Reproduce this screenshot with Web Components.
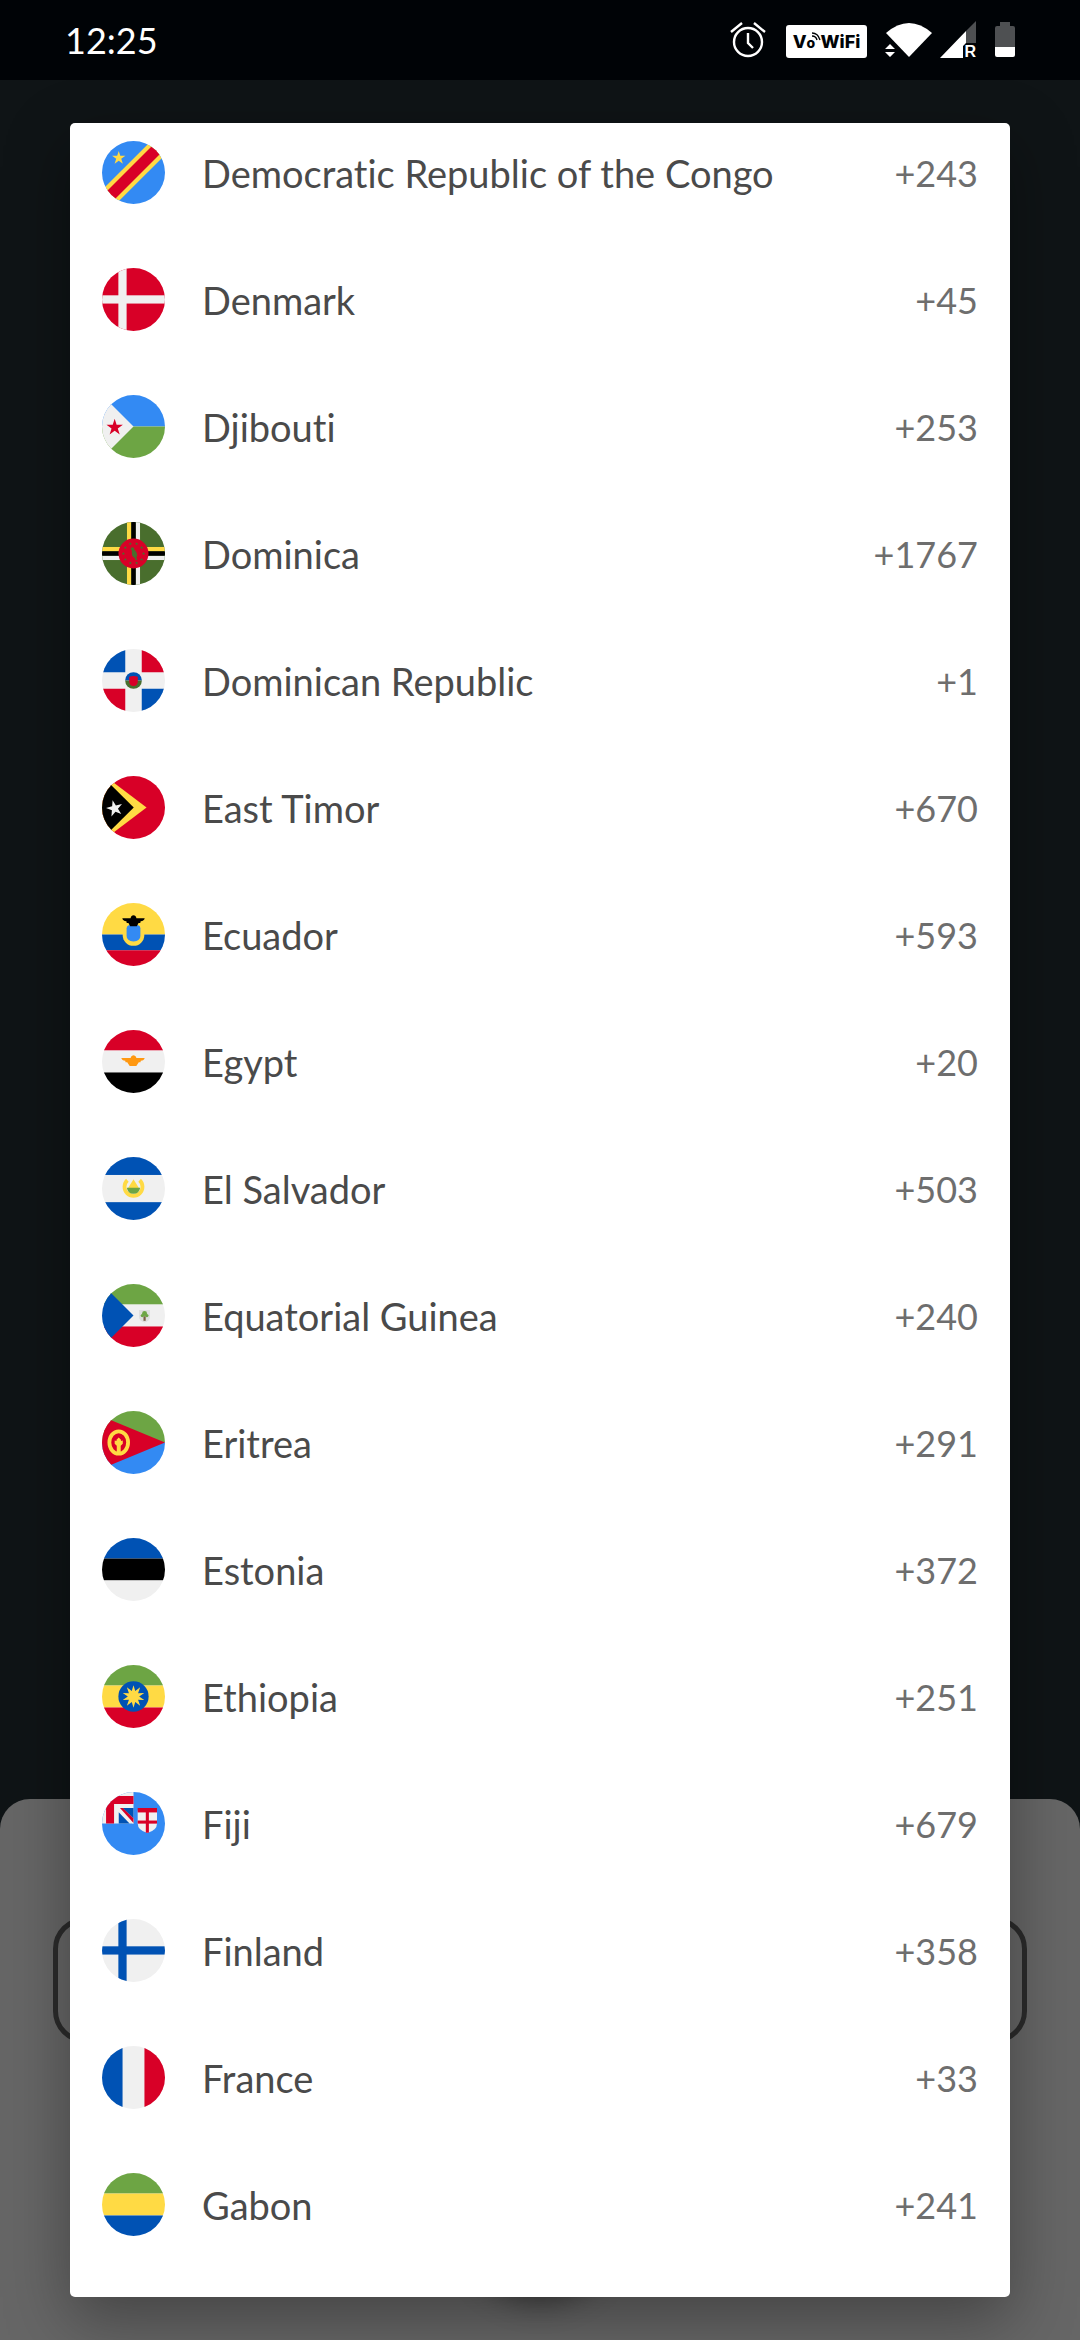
<!DOCTYPE html>
<html lang="en">
<head>
<meta charset="utf-8">
<meta name="viewport" content="width=device-width, initial-scale=1">
<title>Select country</title>
<style>
  html { background: #0f1416; }
  body { margin: 0; font-family: Lato, "Open Sans", sans-serif; font-variant-ligatures: none; }
</style>
</head>
<body>
<country-screen></country-screen>

<script>
const RED = '#d80027', BLUE = '#0052b4', SKY = '#338af3', GREEN = '#6da544',
      DARK = '#496e2d', YELLOW = '#ffda44', WHITE = '#f0f0f0', ORANGE = '#ff9811';

const rect = (x, y, w, h, fill) => `<rect x="${x}" y="${y}" width="${w}" height="${h}" fill="${fill}"/>`;
const path = (d, fill) => `<path d="${d}" fill="${fill}"/>`;
const circle = (x, y, r, fill) => `<circle cx="${x}" cy="${y}" r="${r}" fill="${fill}"/>`;
const star = (cx, cy, r, fill, points = 5, inner = 0.382, turn = 0) => {
  const p = [];
  for (let i = 0; i < points * 2; i++) {
    const a = Math.PI * i / points + turn * Math.PI / 180;
    const k = i % 2 ? r * inner : r;
    p.push(`${(cx + k * Math.sin(a)).toFixed(1)},${(cy - k * Math.cos(a)).toFixed(1)}`);
  }
  return `<polygon points="${p.join(' ')}" fill="${fill}"/>`;
};
const bands = (a, b, c) => rect(0, 0, 512, 167, a) + rect(0, 167, 512, 178, b) + rect(0, 345, 512, 167, c);
const ring = (n, r, size, fill) => Array.from({ length: n }, (_, i) => {
  const a = 2 * Math.PI * i / n + Math.PI / n;
  return star(256 + r * Math.sin(a), 256 - r * Math.cos(a), size, fill);
}).join('');

const FLAGS = {
  cd: rect(0, 0, 512, 512, SKY)
    + '<path d="M-40 552 552 -40" stroke="#ffda44" stroke-width="160"/><path d="M-40 552 552 -40" stroke="#d80027" stroke-width="92"/>'
    + star(136, 138, 57, YELLOW),
  dk: rect(0, 0, 512, 512, RED) + rect(133, 0, 67, 512, WHITE) + rect(0, 222, 512, 67, WHITE),
  dj: rect(0, 0, 512, 256, SKY) + rect(0, 256, 512, 256, GREEN) + path('M0 0 256 256 0 512z', WHITE) + star(103, 264, 70, RED),
  dm: rect(0, 0, 512, 512, DARK)
    + rect(203, 0, 35, 512, YELLOW) + rect(274, 0, 35, 512, WHITE)
    + rect(0, 203, 512, 35, YELLOW) + rect(0, 274, 512, 35, WHITE)
    + rect(238, 0, 36, 512, '#000') + rect(0, 238, 512, 36, '#000')
    + circle(256, 256, 122, RED) + ring(10, 82, 14, DARK)
    + path('M243 205c13-3 22 6 19 19 14 10 25 30 24 52l-7 13 8 20-14-1-9-17c-15-8-22-22-21-40l-2-24-11-8z', DARK),
  do: rect(0, 0, 512, 512, WHITE) + rect(0, 0, 189, 189, BLUE) + rect(323, 0, 189, 189, RED)
    + rect(0, 323, 189, 189, RED) + rect(323, 323, 189, 189, BLUE)
    + path('M188 256a68 68 0 0 1 136 0z', BLUE) + path('M188 256a68 68 0 0 0 136 0z', DARK)
    + path('M221 226q35-13 70 0v37q0 38-35 38t-35-38z', RED),
  tl: rect(0, 0, 512, 512, RED) + path('M0-18 362 256 0 530z', YELLOW) + path('M0 0 258 256 0 512z', '#000') + star(103, 264, 70, WHITE, 5, 0.382, -14),
  ec: rect(0, 0, 512, 256, YELLOW) + rect(0, 256, 512, 128, BLUE) + rect(0, 384, 512, 128, RED)
    + path('M168 250h176v10a88 88 0 0 1-176 0z', YELLOW)
    + path('M200 205q0-30 56-30t56 30v62q0 44-56 46-56-2-56-46z', SKY)
    + path('M165 124h67q5-24 24-24t24 24h67q-4 22-33 24l-3 14h-14l-14 26h-54l-14-26h-14l-3-14q-29-2-33-24z', '#000'),
  eg: bands(RED, WHITE, '#000')
    + path('M165 227h67q5-21 24-21t24 21h67q-4 20-32 23l-2 12h-14l-20 30h-54l-20-30h-14l-2-12q-28-3-32-23z', ORANGE),
  sv: rect(0, 0, 512, 512, WHITE) + rect(0, 0, 512, 146, BLUE) + rect(0, 367, 512, 145, BLUE)
    + '<path d="M206 189a73 73 0 1 0 100 0" fill="none" stroke="#ffda44" stroke-width="31"/>'
    + path('M256 180 300 252H212z', YELLOW) + path('M202 250h108q-7 49-54 49t-54-49z', GREEN),
  gq: bands(GREEN, WHITE, RED) + path('M0 0 256 256 0 512z', BLUE)
    + path('M301 211h89v55q0 34-44 46-45-12-45-46z', '#dedede')
    + rect(337, 262, 18, 37, '#786145') + circle(346, 240, 20, GREEN) + circle(328, 257, 14, GREEN) + circle(364, 257, 14, GREEN),
  er: rect(0, 0, 512, 256, GREEN) + rect(0, 256, 512, 256, SKY) + path('M0 44 75 75 512 256 75 437 0 468z', RED)
    + '<ellipse cx="136" cy="256" rx="76" ry="91" fill="none" stroke="#ffda44" stroke-width="31"/>'
    + path('M136 216 154 234v10l15-4v26l-17 16v60h-32v-60l-17-16v-26l15 4v-10z', YELLOW),
  ee: bands(BLUE, '#000', WHITE),
  et: bands(GREEN, YELLOW, RED) + circle(256, 256, 123, BLUE) + star(256, 256, 92, YELLOW, 10, 0.5),
  fj: rect(0, 0, 512, 512, SKY) + rect(0, 0, 256, 256, WHITE)
    + path('M33 33H256V98H98V256H33z', RED)
    + path('M166 130h90v86z', BLUE) + path('M136 164v92h88z', BLUE)
    + path('M136 130h27L256 223v33h-8z', WHITE) + path('M146 130h24L256 216v36z', RED)
    + path('M290 150h157v104q0 58-78 79-79-21-79-79z', WHITE) + rect(290, 130, 157, 36, RED)
    + rect(290, 232, 157, 25, RED) + rect(356, 150, 25, 181, RED),
  fi: rect(0, 0, 512, 512, WHITE) + rect(133, 0, 67, 512, BLUE) + rect(0, 222, 512, 67, BLUE),
  fr: rect(0, 0, 512, 512, WHITE) + rect(0, 0, 167, 512, BLUE) + rect(345, 0, 167, 512, RED),
  ga: bands(GREEN, YELLOW, BLUE)
};

const COUNTRIES = [
  ['cd', 'Democratic Republic of the Congo', '+243'],
  ['dk', 'Denmark', '+45'],
  ['dj', 'Djibouti', '+253'],
  ['dm', 'Dominica', '+1767'],
  ['do', 'Dominican Republic', '+1'],
  ['tl', 'East Timor', '+670'],
  ['ec', 'Ecuador', '+593'],
  ['eg', 'Egypt', '+20'],
  ['sv', 'El Salvador', '+503'],
  ['gq', 'Equatorial Guinea', '+240'],
  ['er', 'Eritrea', '+291'],
  ['ee', 'Estonia', '+372'],
  ['et', 'Ethiopia', '+251'],
  ['fj', 'Fiji', '+679'],
  ['fi', 'Finland', '+358'],
  ['fr', 'France', '+33'],
  ['ga', 'Gabon', '+241']
];

class StatusBar extends HTMLElement {
  constructor() {
    super();
    this.attachShadow({ mode: 'open' }).innerHTML = `
      <style>
        :host { display: flex; align-items: center; justify-content: space-between; height: 80px;
                padding: 0 65px 0 65px; box-sizing: border-box; background: #000306; color: #fff; }
        time { font-size: 36px; line-height: 46px; }
        .icons { display: flex; align-items: center; }
        svg { display: block; }
        .badge { display: flex; align-items: center; justify-content: center; width: 81px; height: 33px;
                 margin: 2px 18px 0 20px; border-radius: 3px; background: #fff; color: #000306;
                 font: 800 18px/33px Inter, sans-serif; }
        .vo { display: grid; }
        .vo > * { grid-area: 1 / 1; }
        .o { font-size: 14px; padding-top: 3px; }
        .waves { margin: 9px 0 0 4px; }
        .signal { display: grid; margin: 0 19px 0 7px; }
        .signal > * { grid-area: 1 / 1; }
        .roam { align-self: end; justify-self: end; font: 700 16px/14px "Liberation Sans", sans-serif; }
      </style>
      <time>12:25</time>
      <div class="icons">
        <svg width="36" height="36" viewBox="0 0 36 36" fill="none" stroke="#fff" stroke-width="2.4">
          <circle cx="18" cy="20" r="14"/><path d="M18 11v10l5 5M1 10 12 1M35 10 24 1"/>
        </svg>
        <div class="badge"><span>V</span><span class="vo"><span class="o">o</span>
          <svg class="waves" width="10" height="10" viewBox="0 0 10 10" fill="none" stroke="#000306" stroke-width="1.4"><path d="M1 1q6 0 8 7M1 4q4 0 5 4"/></svg></span><span>WiFi</span></div>
        <svg width="48" height="36" viewBox="0 0 48 36" fill="#fff">
          <path d="M1 11Q24-9 47 11L24 35z"/><path d="M0 27 5 22 10 27zM0 30h10l-5 5z"/>
        </svg>
        <div class="signal">
          <svg width="36" height="38" viewBox="0 0 36 38">
            <path d="M26 10 36 0V22H26z" fill="#4e5052"/><path d="M0 37 26 10V22L23 25V37z" fill="#fff"/>
          </svg>
          <span class="roam">R</span>
        </div>
        <svg width="20" height="36" viewBox="0 0 20 36">
          <path d="M5 0h10v4h3q2 0 2 2v19H0V6q0-2 2-2h3z" fill="#4e5052"/><path d="M0 25h20v8q0 2-2 2H2q-2 0-2-2z" fill="#fff"/>
        </svg>
      </div>`;
  }
}
customElements.define('status-bar', StatusBar);

class CountryFlag extends HTMLElement {
  constructor() {
    super();
    this.attachShadow({ mode: 'open' }).innerHTML = `
      <style>
        :host { display: block; flex: none; width: 63px; height: 63px; border-radius: 50%; overflow: hidden; }
        svg { display: block; width: 100%; height: 100%; }
      </style>
      <svg viewBox="0 0 512 512"></svg>`;
  }
  connectedCallback() {
    this.shadowRoot.querySelector('svg').innerHTML = FLAGS[this.getAttribute('code')];
  }
}
customElements.define('country-flag', CountryFlag);

class CountryRow extends HTMLElement {
  constructor() {
    super();
    this.attachShadow({ mode: 'open' }).innerHTML = `
      <style>
        :host { display: block; }
        button { display: flex; align-items: center; gap: 37px; width: 100%; height: 127px; margin: 0;
                 padding: 0 32px; border: 0; background: none; text-align: left;
                 font: inherit; font-variant-ligatures: none; font-size: 38px; line-height: 48px; color: #4a4a4a; }
        .name { flex: 1; }
        .dial { font-size: 36px; color: #6e6e6e; }
      </style>
      <button type="button">
        <slot name="flag"></slot>
        <span class="name"><slot></slot></span>
        <span class="dial"><slot name="dial"></slot></span>
      </button>`;
  }
}
customElements.define('country-row', CountryRow);

class CountryDialog extends HTMLElement {
  constructor() {
    super();
    this.attachShadow({ mode: 'open' }).innerHTML = `
      <style>
        :host { display: block; overflow: hidden; border-radius: 5px; background: #fff;
                box-shadow: 0 22px 64px rgba(0, 0, 0, .34); }
        /* The list rests slightly scrolled past its first row. */
        .list { margin-top: -14px; padding-bottom: 29px; }
      </style>
      <div class="list">${COUNTRIES.map(([code, name, dial]) => `
        <country-row><country-flag slot="flag" code="${code}"></country-flag>${name}<span slot="dial">${dial}</span></country-row>`).join('')}
      </div>`;
  }
}
customElements.define('country-dialog', CountryDialog);

class PhoneSheet extends HTMLElement {
  constructor() {
    super();
    this.attachShadow({ mode: 'open' }).innerHTML = `
      <style>
        :host { display: flex; flex-direction: column; align-items: center; gap: 107px;
                padding: 118px 53px 50px; border-radius: 30px 30px 0 0; background: #666; }
        input { width: 100%; height: 126px; box-sizing: border-box; border: 5px solid #2b2b2b;
                border-radius: 32px; background: none; }
        button { width: 140px; height: 140px; border: 0; border-radius: 50%; background: #444;
                 box-shadow: 0 12px 30px rgba(0, 0, 0, .4); }
      </style>
      <input type="tel"><button type="button"></button>`;
  }
}
customElements.define('phone-sheet', PhoneSheet);

class CountryScreen extends HTMLElement {
  constructor() {
    super();
    this.attachShadow({ mode: 'open' }).innerHTML = `
      <style>
        :host { display: flex; flex-direction: column; min-height: 100vh; }
        main { display: grid; flex: 1; overflow: hidden; }
        main > * { grid-area: 1 / 1; }
        phone-sheet { align-self: end; }
        country-dialog { align-self: start; margin: 43px 70px; }
      </style>
      <status-bar></status-bar>
      <main>
        <phone-sheet inert></phone-sheet>
        <country-dialog role="dialog"></country-dialog>
      </main>`;
  }
}
customElements.define('country-screen', CountryScreen);
</script>
</body>
</html>
